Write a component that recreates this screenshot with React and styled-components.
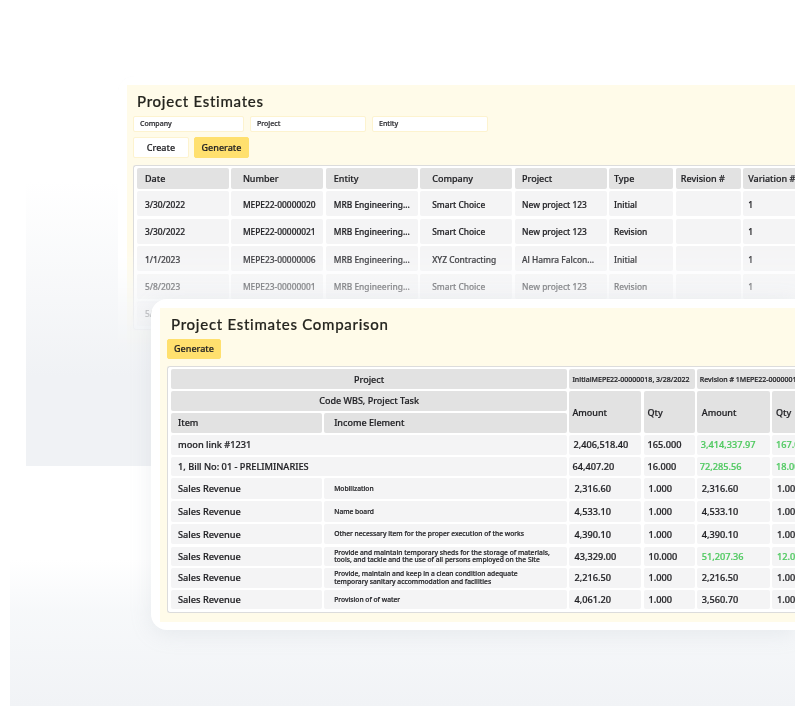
import React from "react";
import styled, { createGlobalStyle } from "styled-components";

const Global = createGlobalStyle`
  html, body { margin: 0; padding: 0; background: #fff; }
  body { font-family: "Noto Sans", "Liberation Sans", sans-serif; color: #26262a; }
`;

const Page = styled.div`
  position: relative;
  width: 795px;
  height: 706px;
  overflow: hidden;
  background: #fff;
`;

const BackWash = styled.div`
  position: absolute;
  left: 26px;
  right: 0;
  top: 110px;
  height: 356px;
  background: linear-gradient(to bottom, rgba(239,241,245,0) 20%, #f0f2f5 75%);
`;

const FloorWash = styled.div`
  position: absolute;
  left: 10px;
  right: 0;
  top: 560px;
  bottom: 0;
  background: linear-gradient(to bottom, rgba(240,243,246,0) 0%, rgba(240,243,246,.55) 35%, #f1f3f6 100%);
`;

const Window = styled.section`
  position: absolute;
  left: ${p => p.$left}px;
  top: ${p => p.$top}px;
  right: 0;
  height: ${p => p.$height}px;
  padding: 9px 0 8px 9px;
  box-sizing: border-box;
  background: #fff;
  border-radius: 16px 0 0 16px;
  will-change: transform;
  box-shadow: ${p => p.$front ? "0 4px 22px rgba(150,160,175,.16)" : "0 0 12px rgba(190,195,205,.22)"};
  ${p => !p.$front && `
    -webkit-mask-image: linear-gradient(to bottom, #000 0, #000 60%, rgba(0,0,0,.32) 80%, rgba(0,0,0,.12) 90%, transparent 100%);
    mask-image: linear-gradient(to bottom, #000 0, #000 60%, rgba(0,0,0,.32) 80%, rgba(0,0,0,.12) 90%, transparent 100%);
  `}
`;

const Sheet = styled.div`
  height: 100%;
  background: #fffbe9;
  padding: ${p => p.$pad};
  box-sizing: border-box;
  display: flex;
  flex-direction: column;
  align-items: flex-start;
  -webkit-text-stroke: 0.2px currentColor;
`;

const Title = styled.h1`
  margin: 0;
  font-family: "Lato", "Open Sans", sans-serif;
  font-size: 15px;
  line-height: 20px;
  font-weight: 500;
  letter-spacing: 0.72px;
  color: #25251f;
`;

const Filters = styled.div`
  display: flex;
  gap: 6px;
  margin: 5px 0 0 -4px;
`;

const Filter = styled.div`
  width: ${p => p.$w}px;
  height: 16px;
  padding-left: 6px;
  box-sizing: border-box;
  background: #fff;
  border: 1px solid #fdf3cf;
  border-radius: 2px;
  font-size: 7px;
  font-weight: 500;
  line-height: 14px;
  color: #2e2e33;
`;

const Actions = styled.div`
  display: flex;
  gap: 5px;
  margin: ${p => p.$margin};
`;

const Button = styled.div`
  height: ${p => p.$h}px;
  width: ${p => p.$w}px;
  box-sizing: border-box;
  border-radius: 2px;
  font-size: 9px;
  font-weight: 500;
  line-height: ${p => p.$h - 2}px;
  text-align: center;
  color: #1f1f23;
  background: ${p => p.$primary ? "#ffe06e" : "#fff"};
  border: 1px solid ${p => p.$primary ? "#ffe06e" : "#fdf3cf"};
`;

const TableFrame = styled.div`
  align-self: stretch;
  margin: ${p => p.$margin};
  padding: 2px 0 3px 3px;
  background: #fff;
  border: 1px solid #dcdcdc;
  border-right: 0;
  border-radius: 3px 0 0 3px;
`;

const Grid = styled.div`
  display: grid;
  grid-template-columns: ${p => p.$cols};
  grid-template-rows: ${p => p.$rows};
  gap: ${p => p.$gap};
  overflow: hidden;
`;

const Head = styled.div`
  display: flex;
  align-items: center;
  justify-content: ${p => p.$center ? "center" : "flex-start"};
  padding-left: ${p => p.$pad ?? 8}px;
  background: #e2e2e2;
  border-radius: 2px;
  font-size: ${p => p.$size ?? 9}px;
  font-weight: 500;
  white-space: nowrap;
  overflow: hidden;
  color: #1f1f23;
  ${p => p.$column && `grid-column: ${p.$column};`}
  ${p => p.$row && `grid-row: ${p.$row};`}
`;

const Cell = styled.div`
  display: flex;
  align-items: center;
  padding-left: ${p => p.$pad ?? 7}px;
  padding-top: ${p => p.$nudge ?? 0}px;
  background: #f4f4f5;
  border-radius: 2px;
  font-size: ${p => p.$size ?? 9.2}px;
  font-weight: 500;
  white-space: nowrap;
  overflow: hidden;
  color: ${p => p.$green ? "#4ec95f" : "#1f1f23"};
  ${p => p.$column && `grid-column: ${p.$column};`}
`;

const FineCell = styled(Cell)`
  font-size: 6.7px;
  line-height: 7.3px;
  white-space: pre-line;
`;

const estimatePads = [8, 11.5, 8, 12, 7.5, 5, 5, 5];
const estimateHeads = ["Date", "Number", "Entity", "Company", "Project", "Type", "Revision #", "Variation #"];
const estimates = [
  ["3/30/2022", "MEPE22-00000020", "MRB Engineering...", "Smart Choice", "New project 123", "Initial", "", "1"],
  ["3/30/2022", "MEPE22-00000021", "MRB Engineering...", "Smart Choice", "New project 123", "Revision", "", "1"],
  ["1/1/2023", "MEPE23-00000006", "MRB Engineering...", "XYZ Contracting", "Al Hamra Falcon...", "Initial", "", "1"],
  ["5/8/2023", "MEPE23-00000001", "MRB Engineering...", "Smart Choice", "New project 123", "Revision", "", "1"],
  ["5/8/2023", "MEPE23-00000002", "MRB Engineering...", "Smart Choice", "New project 123", "Initial", "", "1"],
];

const lines = [
  ["Sales Revenue", "Mobilization", "2,316.60", "1.000", "2,316.60", "1.000"],
  ["Sales Revenue", "Name board", "4,533.10", "1.000", "4,533.10", "1.000"],
  ["Sales Revenue", "Other necessary item for the proper execution of the works", "4,390.10", "1.000", "4,390.10", "1.000"],
  ["Sales Revenue", "Provide and maintain temporary sheds for the storage of materials,\ntools, and tackle and the use of all persons employed on the Site", "43,329.00", "10.000", "51,207.36", "12.000", true],
  ["Sales Revenue", "Provide, maintain and keep in a clean condition adequate\ntemporary sanitary accommodation and facilities", "2,216.50", "1.000", "2,216.50", "1.000"],
  ["Sales Revenue", "Provision of of water", "4,061.20", "1.000", "3,560.70", "1.000"],
];

export default function App() {
  return (
    <Page>
      <Global />
      <BackWash />
      <FloorWash />

      <Window $left={118} $top={76} $height={284}>
        <Sheet $pad="6px 0 0 10px">
          <Title>Project Estimates</Title>
          <Filters>
            <Filter $w={111}>Company</Filter>
            <Filter $w={116}>Project</Filter>
            <Filter $w={116}>Entity</Filter>
          </Filters>
          <Actions $margin="5px 0 0 -4px">
            <Button $w={56} $h={21}>Create</Button>
            <Button $w={55} $h={21} $primary>Generate</Button>
          </Actions>
          <TableFrame $margin="7px 0 0 -4px">
            <Grid $cols="92px 92px 92px 92px 92px 64.5px 65px 80px" $rows="21px 25px 25px 25px 25px 25px" $gap="2.4px">
              {estimateHeads.map((h, i) => <Head key={h} $pad={estimatePads[i]}>{h}</Head>)}
              {estimates.flat().map((v, i) => (
                <Cell key={i} $pad={estimatePads[i % 8]} $size={8.4} $nudge={1}>{v}</Cell>
              ))}
            </Grid>
          </TableFrame>
        </Sheet>
      </Window>

      <Window $left={151} $top={299} $height={331} $front>
        <Sheet $pad="6px 0 0 11px">
          <Title>Project Estimates Comparison</Title>
          <Actions $margin="5px 0 0 -4px">
            <Button $w={54} $h={20} $primary>Generate</Button>
          </Actions>
          <TableFrame $margin="7px 0 0 -4px">
            <Grid $cols="151px 243px 72px 51px 73px 60px" $rows="20px 19.5px 20px 19.5px 19.5px 20.5px 20.5px 20.5px 19px 20px 19px" $gap="2.2px">
              <Head $column="1 / 3" $center $pad={0}>Project</Head>
              <Head $column="3 / 5" $size={7} $pad={3}>InitialMEPE22-00000018, 3/28/2022</Head>
              <Head $column="5 / 7" $size={7} $pad={3}>Revision # 1MEPE22-00000019, 3/28/2022</Head>
              <Head $column="1 / 3" $center $pad={0}>Code WBS, Project Task</Head>
              <Head $column="3" $row="2 / 4" $pad={3}>Amount</Head>
              <Head $column="4" $row="2 / 4" $pad={4}>Qty</Head>
              <Head $column="5" $row="2 / 4" $pad={5}>Amount</Head>
              <Head $column="6" $row="2 / 4" $pad={4}>Qty</Head>
              <Head $pad={7}>Item</Head>
              <Head $pad={10}>Income Element</Head>

              <Cell $column="1 / 3">moon link #1231</Cell>
              <Cell $pad={4}>2,406,518.40</Cell>
              <Cell $pad={4}>165.000</Cell>
              <Cell $pad={4} $green>3,414,337.97</Cell>
              <Cell $pad={4} $green>167.000</Cell>

              <Cell $column="1 / 3">1, Bill No: 01 - PRELIMINARIES</Cell>
              <Cell $pad={3}>64,407.20</Cell>
              <Cell $pad={4}>16.000</Cell>
              <Cell $pad={3} $green>72,285.56</Cell>
              <Cell $pad={4} $green>18.000</Cell>

              {lines.map(([item, el, a1, q1, a2, q2, green], i) => (
                <React.Fragment key={i}>
                  <Cell>{item}</Cell>
                  <FineCell $pad={10}>{el}</FineCell>
                  <Cell $pad={5}>{a1}</Cell>
                  <Cell $pad={5}>{q1}</Cell>
                  <Cell $pad={5} $green={green}>{a2}</Cell>
                  <Cell $pad={5} $green={green}>{q2}</Cell>
                </React.Fragment>
              ))}
            </Grid>
          </TableFrame>
        </Sheet>
      </Window>
    </Page>
  );
}
